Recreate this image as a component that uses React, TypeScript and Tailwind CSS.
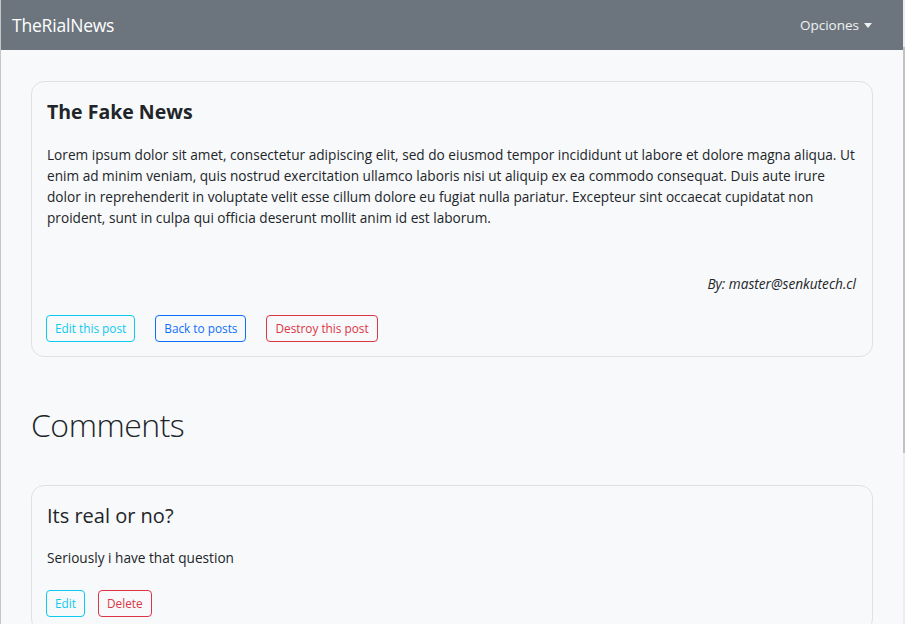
import React from 'react';

const body =
  'Lorem ipsum dolor sit amet, consectetur adipiscing elit, sed do eiusmod tempor incididunt ut labore et dolore magna aliqua. Ut enim ad minim veniam, quis nostrud exercitation ullamco laboris nisi ut aliquip ex ea commodo consequat. Duis aute irure dolor in reprehenderit in voluptate velit esse cillum dolore eu fugiat nulla pariatur. Excepteur sint occaecat cupidatat non proident, sunt in culpa qui officia deserunt mollit anim id est laborum.';

const Btn = ({ color, children }: { color: 'info' | 'primary' | 'danger'; children: React.ReactNode }) => {
  const cls =
    color === 'info'
      ? 'border-[#0dcaf0] text-[#0dcaf0]'
      : color === 'primary'
      ? 'border-[#0d6efd] text-[#0d6efd]'
      : 'border-[#dc3545] text-[#dc3545]';
  return (
    <button className={`h-[27px] px-[8px] border rounded-[4px] text-[11.8px] leading-none ${cls}`}>
      {children}
    </button>
  );
};

export default function App() {
  return (
    <div
      className="h-[624px] w-[905px] overflow-hidden flex bg-[#f8f9fa] text-[#212529]"
      style={{ fontFamily: '"Open Sans", "Noto Sans", sans-serif' }}
    >
      <div className="w-px shrink-0 bg-[#c4c6c8]" />
      <div className="flex-1 flex flex-col">
        {/* navbar */}
        <nav className="h-[50px] shrink-0 bg-[#6c757d] flex items-center justify-between pl-[11px] pr-[31px] text-white">
          <span className="text-[17.5px] tracking-[-0.2px]">TheRialNews</span>
          <span className="flex items-center gap-[5px] text-[13.5px] text-white/90">
            Opciones
            <span className="w-0 h-0 border-l-[4.5px] border-r-[4.5px] border-t-[5px] border-l-transparent border-r-transparent border-t-white/90 mt-[1px]" />
          </span>
        </nav>

        <main className="px-[30px] pt-[31px] shrink-0">
          {/* post */}
          <div className="border border-[#dfe1e4] rounded-[13px] px-[15px] pt-[15px] pb-[14px]">
            <h4 className="text-[19.5px] font-bold leading-[30px]">The Fake News</h4>
            <p className="mt-[17px] text-[13.65px] leading-[21px]">{body}</p>
            <p className="mt-[45px] text-right italic text-[13.65px] leading-[21px] pr-[1px]">By: master@senkutech.cl</p>
            <div className="flex gap-[20px] mt-[21px] -ml-px">
              <Btn color="info">Edit this post</Btn>
              <Btn color="primary">Back to posts</Btn>
              <Btn color="danger">Destroy this post</Btn>
            </div>
          </div>

          <h1 className="mt-[44px] text-[32px] font-light leading-[48px] tracking-[-0.5px]">Comments</h1>

          {/* comment */}
          <div className="mt-[36px] border border-[#dfe1e4] rounded-[13px] px-[15px] pt-[15px] pb-[14px]">
            <h4 className="text-[20px] leading-[30px]">Its real or no?</h4>
            <p className="mt-[16px] text-[13.65px] leading-[21px]">Seriously i have that question</p>
            <div className="flex gap-[13px] mt-[22px] -ml-px">
              <Btn color="info">Edit</Btn>
              <Btn color="danger">Delete</Btn>
            </div>
          </div>
        </main>
      </div>
      {/* scrollbar */}
      <div className="w-[2px] shrink-0 bg-[#ededed] flex flex-col">
        <div className="h-[47px]" />
        <div className="h-[406px] bg-[#c2c2c2]" />
      </div>
    </div>
  );
}
